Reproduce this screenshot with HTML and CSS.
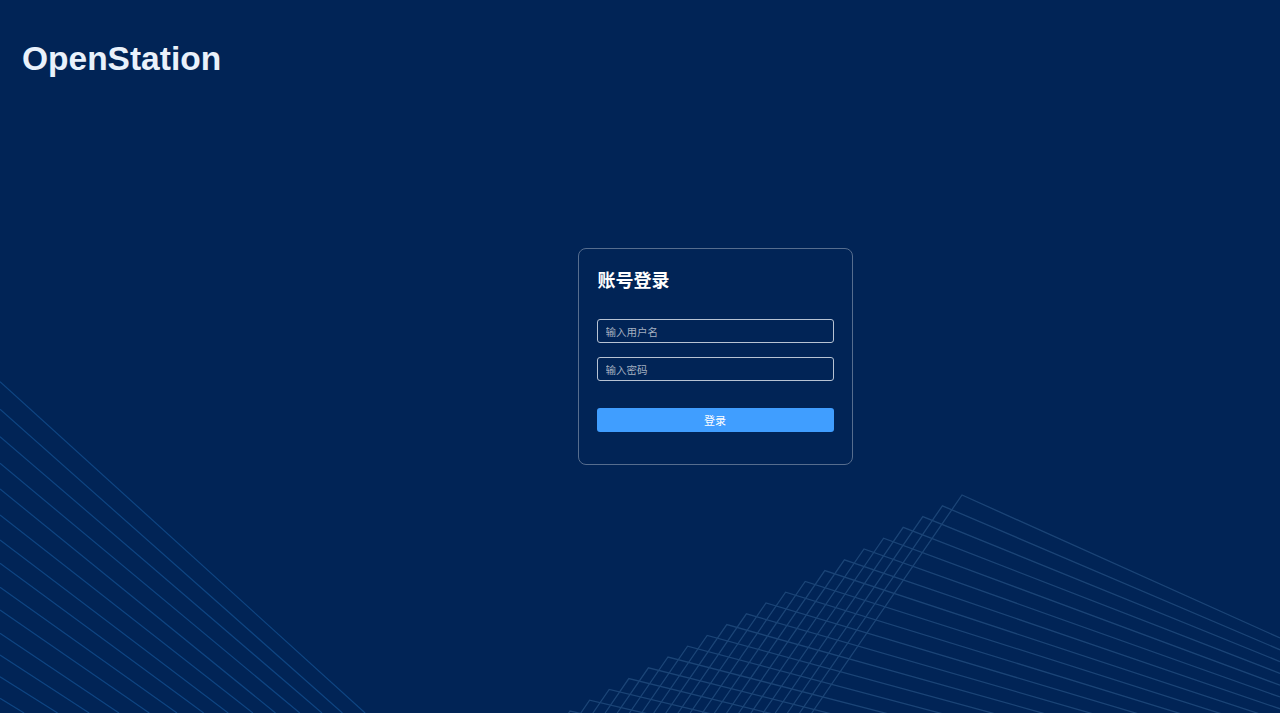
FILE: index.html
```html
<!DOCTYPE html>
<html lang="zh-CN">
<head>
<meta charset="utf-8">
<title>OpenStation</title>
<link rel="stylesheet" href="styles.css">
</head>
<body>
<div class="page">
  <svg class="backdrop" viewBox="0 0 1280 713" preserveAspectRatio="none" aria-hidden="true">
    <g class="fan-left">
      <line x1="0" y1="381.7" x2="365.1" y2="713"/>
      <line x1="0" y1="409.3" x2="342.4" y2="713"/>
      <line x1="0" y1="436.7" x2="322" y2="713"/>
      <line x1="0" y1="463.3" x2="299.8" y2="713"/>
      <line x1="0" y1="489" x2="275.5" y2="713"/>
      <line x1="0" y1="515" x2="252.9" y2="713"/>
      <line x1="0" y1="540" x2="228.2" y2="713"/>
      <line x1="0" y1="563.3" x2="203.7" y2="713"/>
      <line x1="0" y1="587.3" x2="177" y2="713"/>
      <line x1="0" y1="610" x2="149.3" y2="713"/>
      <line x1="0" y1="633.3" x2="119" y2="713"/>
      <line x1="0" y1="655" x2="89.2" y2="713"/>
      <line x1="0" y1="676.7" x2="57.6" y2="713"/>
      <line x1="0" y1="698.3" x2="24.1" y2="713"/>
    </g>
    <g class="fan-right">
      <polyline points="811.7,713 962,495 1280,638"/>
      <polyline points="799.5,713 942.4,505.8 1280,649.8"/>
      <polyline points="787.4,713 922.8,516.6 1280,661.6"/>
      <polyline points="775.2,713 903.2,527.4 1280,673.4"/>
      <polyline points="763,713 883.6,538.2 1280,685.2"/>
      <polyline points="750.9,713 864,549 1280,697"/>
      <polyline points="738.7,713 844.4,559.8 1280,708.8"/>
      <polyline points="726.6,713 824.8,570.6 1280,720.6"/>
      <polyline points="714.4,713 805.2,581.4 1280,732.4"/>
      <polyline points="702.3,713 785.6,592.2 1280,744.2"/>
      <polyline points="690.1,713 766,603 1280,756"/>
      <polyline points="678,713 746.4,613.8 1280,767.8"/>
      <polyline points="665.8,713 726.8,624.6 1280,779.6"/>
      <polyline points="653.7,713 707.2,635.4 1280,791.4"/>
      <polyline points="641.5,713 687.6,646.2 1280,803.2"/>
      <polyline points="629.4,713 668,657 1280,815"/>
      <polyline points="617.2,713 648.4,667.8 1280,826.8"/>
      <polyline points="605.1,713 628.8,678.6 1280,838.6"/>
      <polyline points="592.9,713 609.2,689.4 1280,850.4"/>
      <polyline points="580.8,713 589.6,700.2 1280,862.2"/>
      <polyline points="568.6,713 570,711 1280,874"/>
    </g>
  </svg>

  <header class="brand">OpenStation</header>

  <main class="stage">
    <form class="login-card" onsubmit="return false">
      <h1 class="login-title">账号登录</h1>
      <input class="field" type="text" placeholder="输入用户名">
      <input class="field field-gap" type="password" placeholder="输入密码">
      <button class="submit" type="submit">登录</button>
    </form>
  </main>
</div>
</body>
</html>
```
FILE: styles.css
```css
* {
  box-sizing: border-box;
}

html,
body {
  margin: 0;
  padding: 0;
  height: 100%;
}

body {
  background: #012456;
  font-family: "Liberation Sans", "Noto Sans CJK SC", Arial, sans-serif;
  overflow: hidden;
}

.page {
  position: relative;
  height: 100vh;
  display: flex;
  flex-direction: column;
}

.backdrop {
  position: absolute;
  inset: 0;
  width: 100%;
  height: 100%;
  z-index: 0;
}

.fan-left line {
  stroke: #0f4582;
  stroke-width: 1.2;
  fill: none;
}

.fan-right polyline {
  stroke: #1b4476;
  stroke-width: 1.3;
  fill: none;
}

.brand {
  position: relative;
  z-index: 1;
  height: 78px;
  padding: 40px 0 0 22px;
  font-family: "Liberation Sans", Arial, sans-serif;
  font-weight: 700;
  font-size: 33.5px;
  line-height: 38px;
  color: #e9f1fb;
}

.stage {
  position: relative;
  z-index: 1;
  flex: 1;
  display: flex;
  align-items: center;
  justify-content: center;
  padding: 0 0 78px 150px;
}

.login-card {
  width: 275px;
  display: flex;
  flex-direction: column;
  padding: 18px 18px 32px;
  border: 1px solid #566d8e;
  border-radius: 8px;
}

.login-title {
  margin: 0 0 28px;
  padding-left: 1px;
  font-family: "Noto Sans CJK SC", sans-serif;
  font-size: 18px;
  line-height: 24px;
  font-weight: 700;
  color: #ffffff;
}

.field {
  display: block;
  width: 237px;
  height: 24px;
  margin: 0;
  padding: 0 8px;
  border: 1px solid #b7c3d3;
  border-radius: 3px;
  background: transparent;
  color: #ffffff;
  font-family: "Noto Sans CJK SC", sans-serif;
  font-size: 10.5px;
  outline: none;
}

.field::placeholder {
  color: #a4b0c1;
}

.field-gap {
  margin-top: 14px;
}

.submit {
  display: block;
  width: 237px;
  height: 24px;
  margin-top: 27px;
  padding: 0;
  border: none;
  border-radius: 3px;
  background: #409eff;
  color: #ffffff;
  font-family: "Noto Sans CJK SC", sans-serif;
  font-size: 11px;
  line-height: 24px;
  cursor: pointer;
}
```
